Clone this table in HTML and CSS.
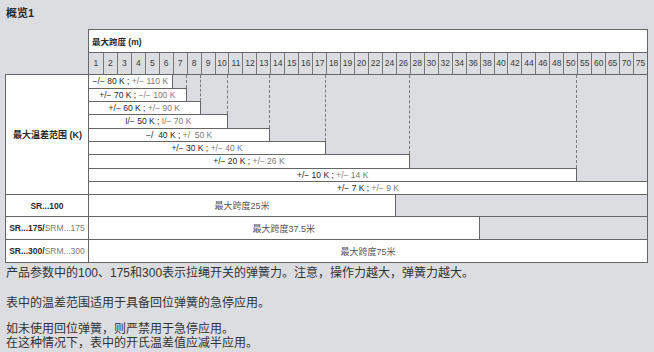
FILE: index.html
```html
<!DOCTYPE html>
<html lang="zh">
<head>
<meta charset="utf-8">
<link rel="stylesheet" href="styles.css">
</head>
<body>
<div class="title">概览1</div>
<div class="head">
  <div class="head-title">最大跨度 (m)</div>
  <div class="nums">
    <span>1</span><span>2</span><span>3</span><span>4</span><span>5</span><span>6</span><span>7</span><span>8</span><span>9</span><span>10</span>
    <span>11</span><span>12</span><span>13</span><span>14</span><span>15</span><span>16</span><span>17</span><span>18</span><span>19</span><span>20</span>
    <span>22</span><span>24</span><span>26</span><span>28</span><span>30</span><span>32</span><span>34</span><span>36</span><span>38</span><span>40</span>
    <span>42</span><span>44</span><span>46</span><span>48</span><span>50</span><span>55</span><span>60</span><span>65</span><span>70</span><span>75</span>
  </div>
</div>
<div class="main">
  <div class="ksec">
    <div class="klabel">最大温差范围 (K)</div>
    <div class="kchart">
      <div class="dash d2"></div>
      <div class="dash d3"></div>
      <div class="dash d4"></div>
      <div class="dash d5"></div>
      <div class="dash d6"></div>
      <div class="dash d7"></div>
      <div class="dash d8"></div>
      <div class="bar b1"><span class="k1">−/− 80 K ;</span> <span class="k2">+/− 110 K</span></div>
      <div class="bar b2"><span class="k1">+/− 70 K ;</span> <span class="k2">−/− 100 K</span></div>
      <div class="bar b3"><span class="k1">+/− 60 K ;</span> <span class="k2">+/− 90 K</span></div>
      <div class="bar b4"><span class="k1">I/− 50 K ;</span> <span class="k2">I/− 70 K</span></div>
      <div class="bar b5"><span class="k1">−/&nbsp; 40 K ;</span> <span class="k2">+/&nbsp; 50 K</span></div>
      <div class="bar b6"><span class="k1">+/− 30 K ;</span> <span class="k2">+/− 40 K</span></div>
      <div class="bar b7"><span class="k1">+/− 20 K ;</span> <span class="k2">+/− 26 K</span></div>
      <div class="bar b8"><span class="k1">+/− 10 K ;</span> <span class="k2">+/− 14 K</span></div>
      <div class="bar b9"><span class="k1">+/− 7 K ;</span> <span class="k2">+/− 9 K</span></div>
    </div>
  </div>
  <div class="sr">
    <div class="srlabel"><b>SR...100</b></div>
    <div class="srchart"><div class="srbar w22">最大跨度25米</div></div>
  </div>
  <div class="sr">
    <div class="srlabel"><b>SR...175/</b><span class="lite">SRM...175</span></div>
    <div class="srchart"><div class="srbar w28">最大跨度37.5米</div></div>
  </div>
  <div class="sr last">
    <div class="srlabel"><b>SR...300/</b><span class="lite">SRM...300</span></div>
    <div class="srchart"><div class="srbar w40">最大跨度75米</div></div>
  </div>
</div>
<div class="notes">
  <p class="n1">产品参数中的100、175和300表示拉绳开关的弹簧力。注意，操作力越大，弹簧力越大。</p>
  <p class="n2">表中的温差范围适用于具备回位弹簧的急停应用。</p>
  <p class="n3">如未使用回位弹簧，则严禁用于急停应用。<br>在这种情况下，表中的开氏温差值应减半应用。</p>
</div>
</body>
</html>
```
FILE: styles.css
```css
* { box-sizing: border-box; }
html, body { margin: 0; padding: 0; }
body {
  width: 654px;
  height: 352px;
  overflow: hidden;
  background: #dcdde1;
  font-family: "Liberation Sans", "Noto Sans CJK SC", sans-serif;
  color: #333;
}
.title {
  padding: 6px 0 0 6px;
  height: 20px;
  line-height: 14px;
  font-size: 11px;
  font-weight: bold;
  color: #2a2a2a;
}
.head {
  margin-top: 9px;
  margin-left: 88px;
  width: 560px;
  border: 1px solid #666;
  border-bottom: none;
}
.head-title {
  height: 23px;
  background: #fff;
  border-bottom: 1px solid #666;
  font-size: 8.5px;
  font-weight: bold;
  padding: 7px 0 0 3px;
  line-height: 11px;
  color: #2a2a2a;
}
.nums {
  display: grid;
  grid-template-columns: repeat(40, 1fr);
  height: 21px;
}
.nums span {
  border-left: 1px solid #777;
  font-size: 8.5px;
  line-height: 21px;
  text-align: center;
  color: #3a3a3a;
}
.nums span:first-child { border-left: none; }
.main {
  margin-left: 5px;
  width: 643px;
  border: 1px solid #666;
}
.ksec {
  display: grid;
  grid-template-columns: 83px 1fr;
  border-bottom: 1px solid #666;
}
.klabel {
  background: #fff;
  border-right: 1px solid #666;
  display: flex;
  align-items: center;
  justify-content: center;
  font-size: 9px;
  font-weight: bold;
  color: #2a2a2a;
  padding-left: 1px;
}
.kchart {
  display: grid;
  grid-template-columns: repeat(40, 1fr);
  grid-template-rows: 13px 13px 13px 14px 13px 13px 14px 13px 13px;
}
.dash {
  grid-row-start: 1;
  border-right: 1px dashed #7a7a7a;
}
.d2 { grid-row-end: 2; grid-column: 1 / span 7; }
.d3 { grid-row-end: 3; grid-column: 1 / span 8; }
.d4 { grid-row-end: 4; grid-column: 1 / span 10; }
.d5 { grid-row-end: 5; grid-column: 1 / span 13; }
.d6 { grid-row-end: 6; grid-column: 1 / span 17; }
.d7 { grid-row-end: 7; grid-column: 1 / span 23; }
.d8 { grid-row-end: 8; grid-column: 1 / span 35; }
.bar {
  background: #fff;
  border-top: 1px solid #666;
  border-right: 1px solid #666;
  font-size: 8.5px;
  text-align: center;
  white-space: nowrap;
  line-height: 12px;
}
.b1 { grid-row: 1; grid-column: 1 / span 6; border-top: none; line-height: 13px; }
.b2 { grid-row: 2; grid-column: 1 / span 7; }
.b3 { grid-row: 3; grid-column: 1 / span 8; }
.b4 { grid-row: 4; grid-column: 1 / span 10; line-height: 13px; }
.b5 { grid-row: 5; grid-column: 1 / span 13; }
.b6 { grid-row: 6; grid-column: 1 / span 17; }
.b7 { grid-row: 7; grid-column: 1 / span 23; line-height: 13px; }
.b8 { grid-row: 8; grid-column: 1 / span 35; }
.b9 { grid-row: 9; grid-column: 1 / span 40; border-right: none; }
.k1 { color: #262626; }
.k2 { color: #7a7a7a; }
.sr {
  display: grid;
  grid-template-columns: 83px 1fr;
  height: 22px;
  border-bottom: 1px solid #666;
}
.sr + .sr { height: 23px; }
.sr.last { border-bottom: none; height: 22px; }
.srlabel {
  background: #fff;
  border-right: 1px solid #666;
  font-size: 8.5px;
  display: flex;
  align-items: center;
  justify-content: center;
  white-space: nowrap;
  color: #2a2a2a;
}
.srlabel .lite { color: #7a7a7a; }
.srchart {
  display: grid;
  grid-template-columns: repeat(40, 1fr);
}
.srbar {
  grid-column-start: 1;
  background: #fff;
  border-right: 1px solid #666;
  display: flex;
  align-items: center;
  justify-content: center;
  font-size: 9px;
  color: #555;
}
.w22 { grid-column-end: span 22; }
.w28 { grid-column-end: span 28; }
.w40 { grid-column-end: span 40; border-right: none; }
.notes {
  padding-left: 6px;
  font-size: 12px;
  line-height: 14px;
  color: #333;
}
.notes p { margin: 0; }
.n1 { margin-top: 3px !important; }
.n2 { margin-top: 16px !important; }
.n3 { margin-top: 12px !important; }
```
